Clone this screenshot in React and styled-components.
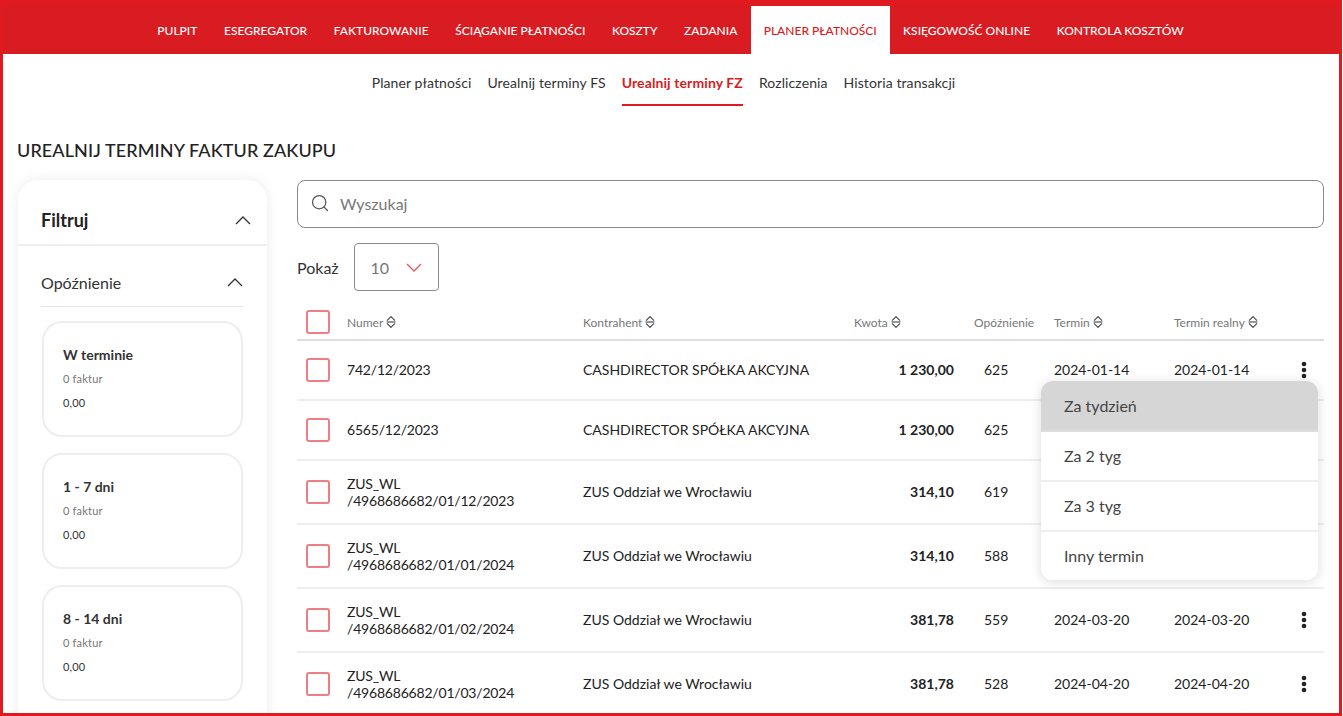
import React from "react"
import styled, {createGlobalStyle} from "styled-components"
import {Search} from "lucide-react"

const Global = createGlobalStyle`
  html, body {
    margin: 0;
    padding: 0;
    background: #fff;
    overflow: hidden;
  }
  * {
    box-sizing: border-box;
  }
  body {
    font-family: Lato, "Liberation Sans", sans-serif;
    color: #222;
  }
`

const Frame = styled.div`
  width: 1342px;
  height: 716px;
  border: 3px solid #e01b20;
  overflow: hidden;
  background: #fff;
`

const TopNav = styled.nav`
  height: 51px;
  padding: 3px 0 0 141px;
  background: linear-gradient(#e01b20 3px, #d91c22 3px);
  display: flex;
  align-items: stretch;
`

const TopItem = styled.a`
  display: flex;
  align-items: center;
  padding: 0 ${props => props.$active ? "13px" : "13.3px"};
  font-size: 12px;
  font-weight: 500;
  white-space: nowrap;
  color: ${props => props.$active ? "#d91c22" : "#fff"};
  background: ${props => props.$active ? "#fff" : "transparent"};
`

const SubNav = styled.div`
  height: 52px;
  display: flex;
  justify-content: center;
  gap: 16px;
  padding-right: 15px;
`

const SubItem = styled.a`
  display: flex;
  align-items: center;
  padding-top: 6px;
  height: 52px;
  font-size: 14px;
  letter-spacing: 0.1px;
  font-weight: ${props => props.$active ? 700 : 400};
  color: ${props => props.$active ? "#d91c22" : "#333"};
  border-bottom: 2px solid ${props => props.$active ? "#e01b20" : "transparent"};
`

const Title = styled.h1`
  margin: 33px 0 0 14px;
  height: 22px;
  font-size: 18px;
  line-height: 22px;
  font-weight: 500;
  letter-spacing: 0.1px;
  color: #222;
`

const Content = styled.div`
  display: flex;
  align-items: flex-start;
  margin-top: 19px;
  padding-left: 15px;
`

const Sidebar = styled.aside`
  width: 249px;
  flex: none;
  border-radius: 20px 20px 0 0;
  background: #fff;
  box-shadow: 0 0 14px rgba(0, 0, 0, 0.08);
`

const FilterHead = styled.div`
  height: 66px;
  padding: 16px 16px 0 23px;
  display: flex;
  align-items: center;
  justify-content: space-between;
  border-bottom: 2px solid #eee;
  font-size: 18px;
  font-weight: 700;
  color: #222;
`

const GroupHead = styled.div`
  margin: 0 24px 0 23px;
  height: 61px;
  padding-top: 12px;
  display: flex;
  align-items: center;
  justify-content: space-between;
  border-bottom: 1px solid #e4e4e4;
  font-size: 16px;
  color: #333;
`

const CardList = styled.div`
  padding: 14px 24px 40px 24px;
  display: flex;
  flex-direction: column;
  gap: 16px;
`

const DelayCard = styled.div`
  height: 116px;
  padding: 23px 19px 0 19px;
  border: 2px solid #eee;
  border-radius: 20px;
`

const CardName = styled.div`
  font-size: 14px;
  line-height: 18px;
  font-weight: 700;
  color: #333;
`

const CardCount = styled.div`
  margin-top: 8px;
  font-size: 11px;
  line-height: 14px;
  letter-spacing: 0.2px;
  color: #777;
`

const CardSum = styled.div`
  margin-top: 10px;
  font-size: 11px;
  line-height: 14px;
  letter-spacing: 0.2px;
  color: #333;
`

const Main = styled.main`
  width: 1027px;
  margin-left: 30px;
  flex: none;
`

const SearchBox = styled.div`
  height: 48px;
  padding: 0 12px 2px 12px;
  display: flex;
  align-items: center;
  gap: 10px;
  border: 1px solid #8a8a8a;
  border-radius: 8px;
  font-size: 16px;
  color: #777;
`

const ShowRow = styled.div`
  margin-top: 15px;
  display: flex;
  align-items: center;
  gap: 15px;
  font-size: 16px;
  color: #333;
`

const PageSize = styled.div`
  width: 85px;
  height: 48px;
  padding: 0 16px;
  display: flex;
  align-items: center;
  justify-content: space-between;
  border: 1px solid #8a8a8a;
  border-radius: 4px;
  font-size: 16px;
  color: #777;
`

const Table = styled.div`
  position: relative;
  margin-top: 14px;
`

const Row = styled.div`
  display: grid;
  grid-template-columns: 41px 236px 271px 100px 20px 80px 120px 116px 28px;
  align-items: center;
  padding-left: 9px;
  height: ${props => props.$h}px;
  border-bottom: 2px solid ${props => props.$head ? "#ddd" : "#eee"};
`

const HeadCell = styled.div`
  display: flex;
  align-items: center;
  gap: 3px;
  font-size: 12px;
  color: #777;
  white-space: nowrap;
`

const Cell = styled.div`
  padding-bottom: 2px;
  font-size: 14px;
  line-height: 17px;
  color: #222;
  white-space: nowrap;
`

const NumberCell = styled(Cell)`
  white-space: normal;
  max-width: 180px;
  letter-spacing: -0.2px;
  padding-bottom: ${props => props.$twoLines ? 0 : 2}px;
`

const Amount = styled(Cell)`
  font-weight: 700;
  text-align: right;
`

const Delay = styled(Cell)`
  padding-left: 10px;
`

const Check = styled.span`
  display: block;
  width: 24px;
  height: 24px;
  border: 2px solid #ed7f84;
  border-radius: 3px;
  background: #fff;
`

const Menu = styled.div`
  position: absolute;
  left: 744px;
  top: 76px;
  width: 277px;
  height: 199px;
  background: #fff;
  border-radius: 12px;
  overflow: hidden;
  box-shadow: 0 2px 12px rgba(0, 0, 0, 0.14);
`

const MenuItem = styled.div`
  height: ${props => props.$h}px;
  padding: 0 0 ${props => props.$active ? 0 : 2}px 23px;
  display: flex;
  align-items: center;
  font-size: 16px;
  color: #444;
  background: ${props => props.$active ? "#d6d6d6" : "#fff"};
  border-bottom: ${props => props.$last ? "none" : `2px solid ${props.$active ? "#dcdcdc" : "#eee"}`};
`

const DotsIcon = styled.svg`
  justify-self: center;
`

const Chevron = () => (
  <svg width="16" height="9" viewBox="0 0 16 9" fill="none">
    <path d="M1 8 L8 1 L15 8" stroke="#333" strokeWidth="1.3" />
  </svg>
)

const ChevronDown = () => (
  <svg width="16" height="9" viewBox="0 0 16 9" fill="none">
    <path d="M1 1 L8 8 L15 1" stroke="#e8555b" strokeWidth="1.3" />
  </svg>
)

const SortIcon = () => (
  <svg width="10" height="12" viewBox="0 0 10 12" fill="none" stroke="#444" strokeWidth="1.1">
    <path d="M1 4.6 L5 0.6 L9 4.6" />
    <path d="M0.6 6 H9.4" />
    <path d="M1 7.4 L5 11.4 L9 7.4" />
  </svg>
)

const Dots = () => (
  <DotsIcon width="6" height="18" viewBox="0 0 6 18" fill="#222">
    <circle cx="3" cy="3" r="2.3" />
    <circle cx="3" cy="9" r="2.3" />
    <circle cx="3" cy="15" r="2.3" />
  </DotsIcon>
)

const topItems = ["PULPIT", "ESEGREGATOR", "FAKTUROWANIE", "ŚCIĄGANIE PŁATNOŚCI", "KOSZTY", "ZADANIA", "PLANER PŁATNOŚCI", "KSIĘGOWOŚĆ ONLINE", "KONTROLA KOSZTÓW"]
const subItems = ["Planer płatności", "Urealnij terminy FS", "Urealnij terminy FZ", "Rozliczenia", "Historia transakcji"]
const delayCards = ["W terminie", "1 - 7 dni", "8 - 14 dni"]
const menuItems = [["Za tydzień", 51], ["Za 2 tyg", 50], ["Za 3 tyg", 50], ["Inny termin", 48]]

const CD = "CASHDIRECTOR SPÓŁKA AKCYJNA"
const ZUS = "ZUS Oddział we Wrocławiu"
const rows = [
  {h: 60, num: "742/12/2023", who: CD, sum: "1 230,00", delay: 625, due: "2024-01-14", real: "2024-01-14"},
  {h: 60, num: "6565/12/2023", who: CD, sum: "1 230,00", delay: 625},
  {h: 64, num: "ZUS_WL /4968686682/01/12/2023", who: ZUS, sum: "314,10", delay: 619},
  {h: 64, num: "ZUS_WL /4968686682/01/01/2024", who: ZUS, sum: "314,10", delay: 588},
  {h: 64, num: "ZUS_WL /4968686682/01/02/2024", who: ZUS, sum: "381,78", delay: 559, due: "2024-03-20", real: "2024-03-20"},
  {h: 64, num: "ZUS_WL /4968686682/01/03/2024", who: ZUS, sum: "381,78", delay: 528, due: "2024-04-20", real: "2024-04-20"},
]

export default () => (
  <Frame>
    <Global />
    <TopNav>
      {topItems.map(item => <TopItem key={item} $active={item === "PLANER PŁATNOŚCI"}>{item}</TopItem>)}
    </TopNav>
    <SubNav>
      {subItems.map(item => <SubItem key={item} $active={item === "Urealnij terminy FZ"}>{item}</SubItem>)}
    </SubNav>
    <Title>UREALNIJ TERMINY FAKTUR ZAKUPU</Title>
    <Content>
      <Sidebar>
        <FilterHead>Filtruj<Chevron /></FilterHead>
        <GroupHead>Opóźnienie<Chevron /></GroupHead>
        <CardList>
          {delayCards.map(name => (
            <DelayCard key={name}>
              <CardName>{name}</CardName>
              <CardCount>0 faktur</CardCount>
              <CardSum>0,00</CardSum>
            </DelayCard>
          ))}
        </CardList>
      </Sidebar>
      <Main>
        <SearchBox><Search size={20} color="#555" strokeWidth={1.5} />Wyszukaj</SearchBox>
        <ShowRow>Pokaż<PageSize>10<ChevronDown /></PageSize></ShowRow>
        <Table>
          <Row $head $h={36}>
            <Check />
            <HeadCell>Numer <SortIcon /></HeadCell>
            <HeadCell>Kontrahent <SortIcon /></HeadCell>
            <HeadCell>Kwota <SortIcon /></HeadCell>
            <span />
            <HeadCell>Opóźnienie</HeadCell>
            <HeadCell>Termin <SortIcon /></HeadCell>
            <HeadCell>Termin realny <SortIcon /></HeadCell>
            <span />
          </Row>
          {rows.map(row => (
            <Row key={row.num} $h={row.h}>
              <Check />
              <NumberCell $twoLines={row.h === 64}>{row.num}</NumberCell>
              <Cell>{row.who}</Cell>
              <Amount>{row.sum}</Amount>
              <span />
              <Delay>{row.delay}</Delay>
              <Cell>{row.due}</Cell>
              <Cell>{row.real}</Cell>
              {row.due ? <Dots /> : <span />}
            </Row>
          ))}
          <Menu>
            {menuItems.map(([item, h], i) => (
              <MenuItem key={item} $h={h} $active={i === 0} $last={i === menuItems.length - 1}>{item}</MenuItem>
            ))}
          </Menu>
        </Table>
      </Main>
    </Content>
  </Frame>
)
